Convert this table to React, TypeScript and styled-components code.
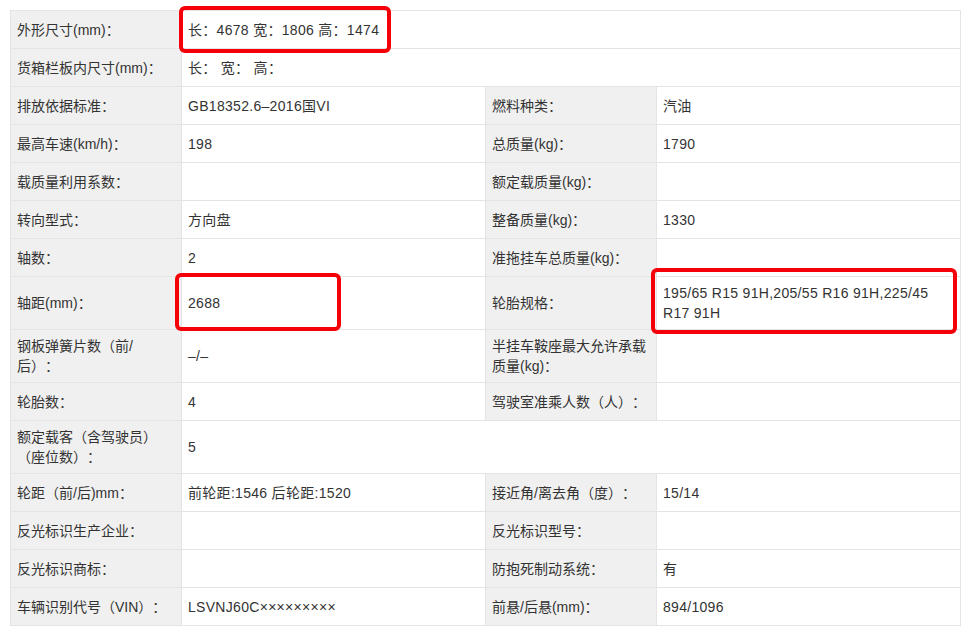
import styled, { createGlobalStyle } from "styled-components";

const GlobalStyle = createGlobalStyle`
  body {
    margin: 0;
    background: #fff;
    font-family: "Liberation Sans", "Noto Sans CJK SC", sans-serif;
    color: #333;
    text-spacing-trim: space-all;
  }
`;

const Page = styled.div`
  padding: 10px;
`;

const Table = styled.table`
  width: 950px;
  border-collapse: collapse;
  table-layout: fixed;
  font-size: 14px;
  line-height: 20px;
`;

const Col = styled.col<{ $w: number }>`
  width: ${(p) => p.$w}px;
`;

const Label = styled.td`
  background: #f0f0f0;
  border: 1px solid #e4e4e4;
  padding: 6px 8px 6px 6px;
  height: 25px;
  vertical-align: middle;
  color: #333;
`;

const Value = styled.td`
  position: relative;
  background: #fff;
  border: 1px solid #e4e4e4;
  padding: 6px;
  height: 25px;
  vertical-align: middle;
  color: #333;
  letter-spacing: 0.3px;
`;

// red marker drawn over a cell
const Highlight = styled.span<{ $top: number; $left: number; $bottom: number; $width?: number; $right?: number }>`
  position: absolute;
  z-index: 2;
  top: ${(p) => p.$top}px;
  left: ${(p) => p.$left}px;
  bottom: ${(p) => p.$bottom}px;
  ${(p) => (p.$width !== undefined ? `width: ${p.$width}px;` : `right: ${p.$right}px;`)}
  border: 4px solid #f50008;
  border-radius: 6px;
  box-sizing: border-box;
  pointer-events: none;
`;

type Mark = { top: number; left: number; bottom: number; width?: number; right?: number };

type Cell = { text: string; span?: number; mark?: Mark };

type Row = { label: string; value: Cell; label2?: string; value2?: Cell };

const rows: Row[] = [
  {
    label: "外形尺寸(mm)：",
    value: { text: "长：4678 宽：1806 高：1474", span: 3, mark: { top: -5, left: -3, bottom: -5, width: 212 } },
  },
  { label: "货箱栏板内尺寸(mm)：", value: { text: "长： 宽： 高：", span: 3 } },
  { label: "排放依据标准：", value: { text: "GB18352.6–2016国VI" }, label2: "燃料种类：", value2: { text: "汽油" } },
  { label: "最高车速(km/h)：", value: { text: "198" }, label2: "总质量(kg)：", value2: { text: "1790" } },
  { label: "载质量利用系数：", value: { text: "" }, label2: "额定载质量(kg)：", value2: { text: "" } },
  { label: "转向型式：", value: { text: "方向盘" }, label2: "整备质量(kg)：", value2: { text: "1330" } },
  { label: "轴数：", value: { text: "2" }, label2: "准拖挂车总质量(kg)：", value2: { text: "" } },
  {
    label: "轴距(mm)：",
    value: { text: "2688", mark: { top: -4, left: -7, bottom: -2, width: 166 } },
    label2: "轮胎规格：",
    value2: {
      text: "195/65 R15 91H,205/55 R16 91H,225/45 R17 91H",
      mark: { top: -9, left: -6, bottom: -5, right: 3 },
    },
  },
  { label: "钢板弹簧片数（前/后）：", value: { text: "–/–" }, label2: "半挂车鞍座最大允许承载质量(kg)：", value2: { text: "" } },
  { label: "轮胎数：", value: { text: "4" }, label2: "驾驶室准乘人数（人）：", value2: { text: "" } },
  { label: "额定载客（含驾驶员）（座位数）：", value: { text: "5", span: 3 } },
  { label: "轮距（前/后)mm：", value: { text: "前轮距:1546 后轮距:1520" }, label2: "接近角/离去角（度）：", value2: { text: "15/14" } },
  { label: "反光标识生产企业：", value: { text: "" }, label2: "反光标识型号：", value2: { text: "" } },
  { label: "反光标识商标：", value: { text: "" }, label2: "防抱死制动系统：", value2: { text: "有" } },
  { label: "车辆识别代号（VIN）：", value: { text: "LSVNJ60C×××××××××" }, label2: "前悬/后悬(mm)：", value2: { text: "894/1096" } },
];

function ValueCell({ cell }: { cell: Cell }) {
  return (
    <Value colSpan={cell.span}>
      {cell.text}
      {cell.mark && (
        <Highlight
          $top={cell.mark.top}
          $left={cell.mark.left}
          $bottom={cell.mark.bottom}
          $width={cell.mark.width}
          $right={cell.mark.right}
        />
      )}
    </Value>
  );
}

export default function App() {
  return (
    <Page>
      <GlobalStyle />
      <Table>
        <colgroup>
          <Col $w={171} />
          <Col $w={304} />
          <Col $w={171} />
          <Col $w={304} />
        </colgroup>
        <tbody>
          {rows.map((r) => (
            <tr key={r.label}>
              <Label>{r.label}</Label>
              <ValueCell cell={r.value} />
              {r.label2 !== undefined && <Label>{r.label2}</Label>}
              {r.value2 && <ValueCell cell={r.value2} />}
            </tr>
          ))}
        </tbody>
      </Table>
    </Page>
  );
}
